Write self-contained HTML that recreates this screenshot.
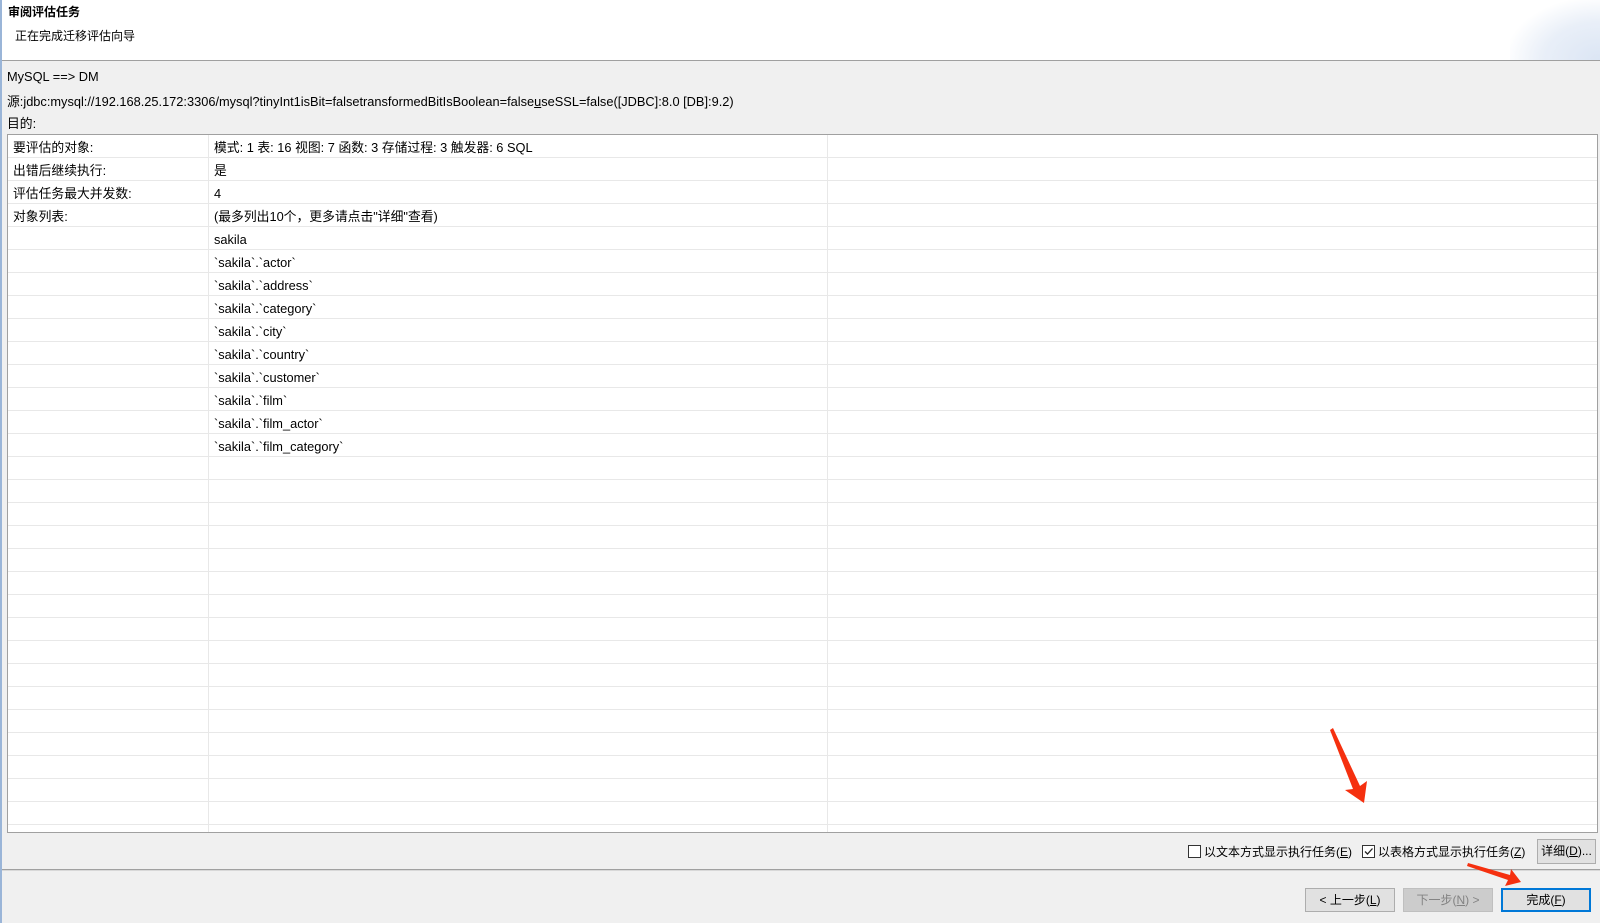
<!DOCTYPE html>
<html><head><meta charset="utf-8"><style>
*{margin:0;padding:0;box-sizing:border-box}
body{width:1600px;height:923px;background:#f0f0f0;position:relative;overflow:hidden;font-family:"Liberation Sans","Noto Sans CJK SC",sans-serif;font-size:12.8px;color:#000}
.abs{position:absolute;white-space:nowrap}
#hdr{position:absolute;left:0;top:0;width:1600px;height:61px;background:#fff;border-bottom:1px solid #a0a0a0}
#grad{position:absolute;right:0;top:0;width:90px;height:60px;background:radial-gradient(ellipse at 100% 100%,#dbe5f4 0%,#e9eff8 45%,rgba(255,255,255,0) 75%)}
#lb{position:absolute;left:0;top:0;width:2px;height:923px;background:#9ab5d8}
#tbl{position:absolute;left:7px;top:134px;width:1591px;height:699px;background:#fff;border:1px solid #a0a0a0;overflow:hidden}
.row{position:absolute;left:0;width:1589px;height:23px;border-bottom:1px solid #e8e8e8}
.c{position:absolute;top:1px;height:23px;line-height:23px;white-space:nowrap}
.vl{position:absolute;top:0;width:1px;height:699px;background:#e8e8e8}
.btn{position:absolute;height:24px;border:1px solid #adadad;background:#e1e1e1;text-align:center;line-height:22px;font-size:12px}
.cb{position:absolute;width:13px;height:13px;border:1px solid #333;background:#fff}
</style></head><body>
<div id="hdr"><div id="grad"></div></div>
<div id="lb"></div>
<div class="abs" style="left:8px;top:3px;font-weight:bold;font-size:12px">审阅评估任务</div>
<div class="abs" style="left:15px;top:27px;font-size:12px">正在完成迁移评估向导</div>
<div class="abs" style="left:7px;top:69px">MySQL ==&gt; DM</div>
<div class="abs" style="left:7px;top:91px">源:jdbc:mysql://192.168.25.172:3306/mysql?tinyInt1isBit=falsetransformedBitIsBoolean=false<u>u</u>seSSL=false([JDBC]:8.0 [DB]:9.2)</div>
<div class="abs" style="left:7px;top:113px">目的:</div>
<div id="tbl">
<div class="vl" style="left:200px"></div>
<div class="vl" style="left:819px"></div>
<div class="row" style="top:0"><span class="c" style="left:5px">要评估的对象:</span><span class="c" style="left:206px">模式: 1 表: 16 视图: 7 函数: 3 存储过程: 3 触发器: 6 SQL</span></div>
<div class="row" style="top:23px"><span class="c" style="left:5px">出错后继续执行:</span><span class="c" style="left:206px">是</span></div>
<div class="row" style="top:46px"><span class="c" style="left:5px">评估任务最大并发数:</span><span class="c" style="left:206px">4</span></div>
<div class="row" style="top:69px"><span class="c" style="left:5px">对象列表:</span><span class="c" style="left:206px">(最多列出10个，更多请点击"详细"查看)</span></div>
<div class="row" style="top:92px"><span class="c" style="left:206px">sakila</span></div>
<div class="row" style="top:115px"><span class="c" style="left:206px">`sakila`.`actor`</span></div>
<div class="row" style="top:138px"><span class="c" style="left:206px">`sakila`.`address`</span></div>
<div class="row" style="top:161px"><span class="c" style="left:206px">`sakila`.`category`</span></div>
<div class="row" style="top:184px"><span class="c" style="left:206px">`sakila`.`city`</span></div>
<div class="row" style="top:207px"><span class="c" style="left:206px">`sakila`.`country`</span></div>
<div class="row" style="top:230px"><span class="c" style="left:206px">`sakila`.`customer`</span></div>
<div class="row" style="top:253px"><span class="c" style="left:206px">`sakila`.`film`</span></div>
<div class="row" style="top:276px"><span class="c" style="left:206px">`sakila`.`film_actor`</span></div>
<div class="row" style="top:299px"><span class="c" style="left:206px">`sakila`.`film_category`</span></div>
<div class="row" style="top:322px"></div><div class="row" style="top:345px"></div><div class="row" style="top:368px"></div><div class="row" style="top:391px"></div><div class="row" style="top:414px"></div><div class="row" style="top:437px"></div><div class="row" style="top:460px"></div><div class="row" style="top:483px"></div><div class="row" style="top:506px"></div><div class="row" style="top:529px"></div><div class="row" style="top:552px"></div><div class="row" style="top:575px"></div><div class="row" style="top:598px"></div><div class="row" style="top:621px"></div><div class="row" style="top:644px"></div><div class="row" style="top:667px"></div>
</div>
<div class="cb" style="left:1188px;top:845px"></div>
<div class="abs" style="left:1204px;top:843px;font-size:12px">以文本方式显示执行任务(<u>E</u>)</div>
<div class="cb" style="left:1362px;top:845px"><svg width="11" height="11" style="position:absolute;left:0;top:0"><path d="M2 5.5 L4.5 8 L9.5 2.5" stroke="#222" stroke-width="1.3" fill="none"/></svg></div>
<div class="abs" style="left:1378px;top:843px;font-size:12px">以表格方式显示执行任务(<u>Z</u>)</div>
<div class="btn" style="left:1537px;top:839px;width:59px;height:25px">详细(<u>D</u>)...</div>
<div style="position:absolute;left:2px;top:869px;width:1598px;height:2px;background:#a0a0a0;border-bottom:1px solid #d8d8d8"></div>
<div class="btn" style="left:1305px;top:888px;width:90px">&lt; 上一步(<u>L</u>)</div>
<div class="btn" style="left:1403px;top:888px;width:90px;background:#cccccc;border-color:#bfbfbf;color:#838383">下一步(<u>N</u>) &gt;</div>
<div class="btn" style="left:1501px;top:888px;width:90px;border:2px solid #0078d7;line-height:20px">完成(<u>F</u>)</div>
<svg style="position:absolute;left:0;top:0" width="1600" height="923">
<path d="M1330 730 L1333 728 L1360 786 L1367 781 L1364 803 L1345 790 L1353 789 Z" fill="#f5300f"/>
<path d="M1467 866 L1468 863 L1510 875 L1511 869 L1521 882 L1505 886 L1508 880 Z" fill="#f5300f"/>
</svg>
</body></html>
